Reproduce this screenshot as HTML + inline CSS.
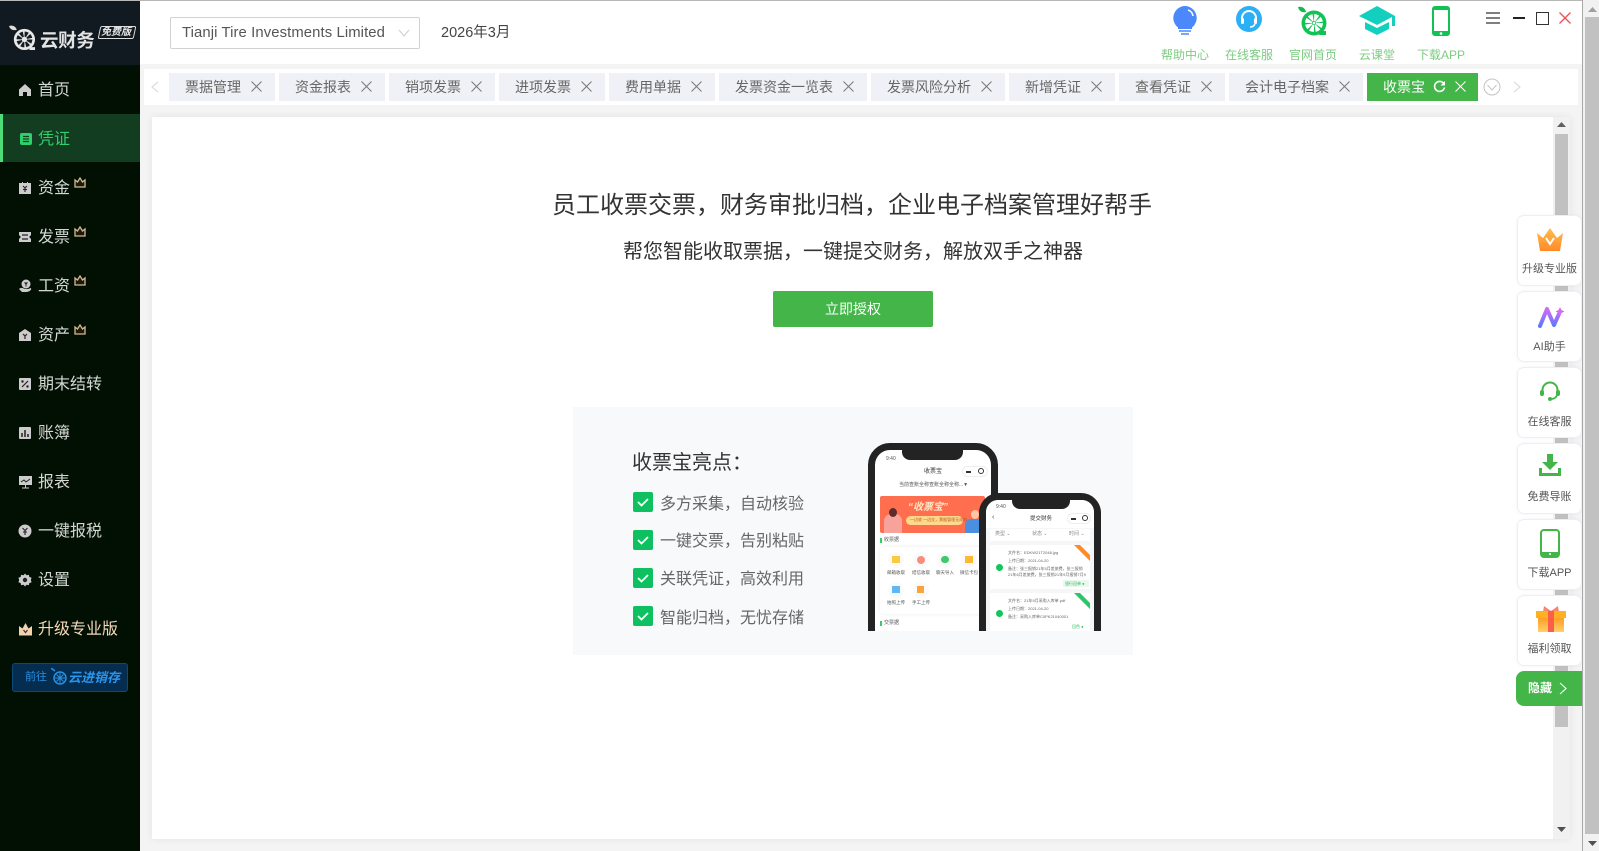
<!DOCTYPE html>
<html lang="zh-CN"><head><meta charset="utf-8"><title>云财务</title>
<style>
*{box-sizing:border-box}
html,body{margin:0;padding:0;width:1599px;height:851px;overflow:hidden;background:#f4f4f5;font-family:"Liberation Sans","Noto Sans CJK SC",sans-serif}
.a{position:absolute}
.t{position:absolute;white-space:nowrap}
#side{position:absolute;left:0;top:0;width:140px;height:851px;background:#020f03}
#logo{position:absolute;left:0;top:0;width:140px;height:65px;background:#111a20}
.n{position:absolute;left:0;width:140px;height:48px;color:#d4d8d4;font-size:16px;line-height:52px;padding-left:38px}
.n>svg{position:absolute;left:18px;top:18px}
.cr{position:absolute;left:74px;top:14px;width:12px;height:11px;line-height:0}
.cr svg{display:block}
.tab{position:absolute;top:73px;height:28px;background:#f0f1f7;color:#666;font-size:14px;line-height:28px;padding-left:16px;white-space:nowrap}
.tab svg{position:absolute;top:8px;right:13px}
.hl{position:absolute;top:47px;color:#7dcc80;font-size:12px;line-height:16px;width:70px;text-align:center;white-space:nowrap}
.f{position:absolute;left:1517px;width:65px;background:#fff;border:1px solid #eeeef9;border-radius:7px;box-shadow:0 0 3px rgba(120,120,180,.08)}
.f span{position:absolute;left:-3px;right:-3px;text-align:center;top:45px;font-size:11px;line-height:16px;color:#555;white-space:nowrap}
.f svg{position:absolute}
.chk{position:absolute;left:633px;width:20px;height:20px;background:#0ec05f;border-radius:2px}
.li{position:absolute;left:660px;font-size:16px;line-height:22px;color:#666;white-space:nowrap}
.x5{font-size:5px;line-height:7px;color:#555}
</style></head><body>

<div class="a" style="left:0;top:0;width:1582px;height:1px;background:#b8b8b8;z-index:5"></div>
<div class="a" style="left:140px;top:0;width:1442px;height:64px;background:#fff"></div>

<div id="side">
 <div id="logo">
  <svg class="a" style="left:9px;top:25px" width="27" height="26" viewBox="0 0 28 27"><path d="M0 1c3-1 7 0 8 4-3 1-7 0-8-4z" fill="#ddd"/><circle cx="16" cy="15" r="11" fill="#e8e8e8"/><circle cx="16" cy="15" r="5.500" fill="none" stroke="#161d22" stroke-width="5.500" stroke-dasharray="3 1.320"/><circle cx="16" cy="15" r="1.300" fill="#e8e8e8"/><path d="M22 23l5 0 0 3-6 0z" fill="#e8e8e8"/></svg>
  <div class="t" style="left:40px;top:29px;font-size:18.500px;line-height:24px;font-weight:700;color:#e4e4e4;letter-spacing:-.4px">云财务</div>
  <div class="a" style="left:99px;top:26px;width:36px;height:13px;border:1px solid #ddd;border-radius:2px;transform:skewX(-12deg)"></div>
  <div class="t" style="left:101px;top:27px;font-size:10px;line-height:12px;font-weight:700;color:#e8e8e8;font-style:italic">免费版</div>
 </div>

 <div class="n" style="top:65px"><svg width="14" height="14" viewBox="0 0 14 14"><path d="M7 1L1 6.500V13h4V9h4v4h4V6.500z" fill="#ccc"/></svg>首页</div>
 <div class="n" style="top:114px;background:#133d20;color:#2fd06c;border-left:3px solid #4cdc78;padding-left:35px"><svg style="left:16px" width="14" height="14" viewBox="0 0 14 14"><rect x="1" y="1" width="12" height="12" rx="2" fill="#2fd06c"/><path d="M4 4.500h6M4 7h6M4 9.500h6" stroke="#133d20" stroke-width="1.200"/></svg>凭证</div>
 <div class="n" style="top:163px"><svg width="14" height="14" viewBox="0 0 14 14"><path d="M1 2h3V1h1v1h4V1h1v1h3v11H1z" fill="#ccc"/><path d="M5 5l2 2 2-2M7 7v4M5 8.500h4" stroke="#222" stroke-width="1.100" fill="none"/></svg>资金<span class="cr"><svg width="12" height="11" viewBox="0 0 12 11"><path d="M1 3l2.500 2L6 1l2.500 4L11 3v7H1z" fill="#1c1a10" stroke="#d4bb8e" stroke-width="1.300"/></svg></span></div>
 <div class="n" style="top:212px"><svg width="14" height="14" viewBox="0 0 14 14"><path d="M1 2h12v3.500a1.500 1.500 0 000 3V12H1V8.500a1.500 1.500 0 000-3z" fill="#ccc"/><path d="M4 5h6M4 9h6" stroke="#222" stroke-width="1.200"/></svg>发票<span class="cr"><svg width="12" height="11" viewBox="0 0 12 11"><path d="M1 3l2.500 2L6 1l2.500 4L11 3v7H1z" fill="#1c1a10" stroke="#d4bb8e" stroke-width="1.300"/></svg></span></div>
 <div class="n" style="top:261px"><svg width="15" height="14" viewBox="0 0 15 14"><circle cx="8" cy="5" r="4.500" fill="#ccc"/><path d="M6.500 3.500L8 5l1.500-1.500M8 5v2.500" stroke="#222"/><path d="M1 10c2-2 4-1 6 0h3l3-1c1 2-2 4-5 4H4z" fill="#ccc"/></svg>工资<span class="cr"><svg width="12" height="11" viewBox="0 0 12 11"><path d="M1 3l2.500 2L6 1l2.500 4L11 3v7H1z" fill="#1c1a10" stroke="#d4bb8e" stroke-width="1.300"/></svg></span></div>
 <div class="n" style="top:310px"><svg width="14" height="14" viewBox="0 0 14 14"><path d="M7 1l6 4v8H1V5z" fill="#ccc"/><path d="M5 6l2 2 2-2M7 8v3" stroke="#222" stroke-width="1.200" fill="none"/></svg>资产<span class="cr"><svg width="12" height="11" viewBox="0 0 12 11"><path d="M1 3l2.500 2L6 1l2.500 4L11 3v7H1z" fill="#1c1a10" stroke="#d4bb8e" stroke-width="1.300"/></svg></span></div>
 <div class="n" style="top:359px"><svg width="14" height="14" viewBox="0 0 14 14"><rect x="1" y="1" width="12" height="12" rx="1" fill="#ccc"/><path d="M4 10l6-6" stroke="#222" stroke-width="1.200"/><circle cx="4.500" cy="4.500" r="1.200" fill="#222"/><circle cx="9.500" cy="9.500" r="1.200" fill="#222"/></svg>期末结转</div>
 <div class="n" style="top:408px"><svg width="14" height="14" viewBox="0 0 14 14"><rect x="1" y="1" width="12" height="12" rx="1" fill="#ccc"/><path d="M4 7v4M7 4v7M10 8v3" stroke="#222" stroke-width="1.500"/></svg>账簿</div>
 <div class="n" style="top:457px"><svg width="15" height="14" viewBox="0 0 15 14"><rect x="1" y="1" width="13" height="9" fill="#ccc"/><path d="M3 7l3-2 2 2 4-3" stroke="#222" fill="none"/><path d="M7.500 10v3M4 13h7" stroke="#ccc"/></svg>报表</div>
 <div class="n" style="top:506px"><svg width="14" height="14" viewBox="0 0 14 14"><circle cx="7" cy="7" r="6.500" fill="#ccc"/><path d="M4.500 4L7 6.500 9.500 4M7 6.500V11M5 8h4" stroke="#222" stroke-width="1.100" fill="none"/></svg>一键报税</div>
 <div class="n" style="top:555px"><svg width="14" height="14" viewBox="0 0 14 14"><path d="M7 .5l1.500 1.700 2.300-.5.600 2.300 2.200.8-.8 2.200.8 2.200-2.200.8-.6 2.300-2.300-.5L7 13.500l-1.500-1.700-2.300.5-.6-2.300-2.200-.8.800-2.200-.8-2.200 2.200-.8.600-2.300 2.300.5z" fill="#ccc"/><circle cx="7" cy="7" r="2.200" fill="#222"/></svg>设置</div>
 <div class="n" style="top:604px;color:#f5d9b8"><svg width="15" height="14" viewBox="0 0 15 14"><path d="M1 4l3.500 2.500L7.500 1l3 5.500L14 4v9.500H1z" fill="#f3d3ae"/><path d="M5.500 8L7.500 10.500 9.500 8" stroke="#333" stroke-width="1.200" fill="none"/></svg>升级专业版</div>

 <div class="a" style="left:12px;top:663px;width:116px;height:29px;background:#052d4f;border:1px solid #0b4a78;border-radius:3px"></div>
 <div class="t" style="left:25px;top:670px;font-size:11px;line-height:15px;color:#2b8fe0">前往</div>
 <svg class="a" style="left:51px;top:668px" width="16" height="18" viewBox="0 0 16 18"><path d="M0 0l4 3" stroke="#2b8fe0" stroke-width="1.500"/><circle cx="9" cy="10" r="6" fill="none" stroke="#2b8fe0" stroke-width="1.500"/><path d="M9 5v10M4 10h10M5.500 6.500l7 7M12.500 6.500l-7 7" stroke="#2b8fe0"/></svg>
 <div class="t" style="left:68px;top:669px;font-size:13px;line-height:17px;font-weight:700;font-style:italic;color:#2b95ee">云进销存</div>
</div>

<!-- header -->
<div class="a" style="left:170px;top:17px;width:250px;height:32px;border:1px solid #d2d2d2;border-radius:2px;background:#fff"></div>
<div class="t" style="left:182px;top:23px;font-size:14.850px;line-height:20px;color:#555;letter-spacing:.1px">Tianji Tire Investments Limited</div>
<svg class="a" style="left:398px;top:29px" width="12" height="8" viewBox="0 0 12 8"><path d="M1 1l5 6 5-6" fill="none" stroke="#ccc"/></svg>
<div class="t" style="left:441px;top:23px;font-size:14.500px;line-height:20px;color:#444">2026年3月</div>

<svg class="a" style="left:1172px;top:5px" width="26" height="32" viewBox="0 0 26 32"><path d="M13 1a12 12 0 00-7 21.500V24h14v-1.500A12 12 0 0013 1z" fill="#4b88fb"/><path d="M16 5a7 7 0 015 6" stroke="#fff" stroke-width="1.600" fill="none"/><path d="M7 26h12M9 29h8" stroke="#4b88fb" stroke-width="1.600"/></svg>
<svg class="a" style="left:1236px;top:6px" width="26" height="26" viewBox="0 0 26 26"><circle cx="13" cy="13" r="13" fill="#2bb0f5"/><path d="M6 14v-2a7 7 0 0114 0v2" fill="none" stroke="#fff" stroke-width="2"/><rect x="5" y="12" width="3" height="6" rx="1.500" fill="#fff"/><rect x="18" y="12" width="3" height="6" rx="1.500" fill="#fff"/><path d="M19 18c-1 2-3 3-5 3" fill="none" stroke="#fff" stroke-width="1.500"/></svg>
<svg class="a" style="left:1297px;top:6px" width="32" height="30" viewBox="0 0 32 30"><path d="M1 1c4-1 7 1 8 5-4 1-7-1-8-5z" fill="#13b84f"/><circle cx="17" cy="17" r="12.500" fill="#13c257"/><circle cx="17" cy="17" r="5.500" fill="none" stroke="#fff" stroke-width="7" stroke-dasharray="3.200 1.120"/><circle cx="17" cy="17" r="1.300" fill="#fff"/><path d="M24 25l5 0 0 4-7 0z" fill="#13c257"/></svg>
<svg class="a" style="left:1359px;top:6px" width="36" height="30" viewBox="0 0 36 30"><path d="M18 0L0 10l18 9 15-8v9h3V10z" fill="#12d0bd"/><path d="M6 16v7l12 6 12-6v-7l-12 6z" fill="#12d0bd"/></svg>
<svg class="a" style="left:1432px;top:6px" width="18" height="30" viewBox="0 0 18 30"><rect width="18" height="30" rx="3" fill="#13c257"/><rect x="2" y="4" width="14" height="21" fill="#fff"/><circle cx="9" cy="27.500" r="1.300" fill="#fff"/></svg>

<div class="hl" style="left:1150px">帮助中心</div>
<div class="hl" style="left:1214px">在线客服</div>
<div class="hl" style="left:1278px">官网首页</div>
<div class="hl" style="left:1342px">云课堂</div>
<div class="hl" style="left:1406px">下载APP</div>

<svg class="a" style="left:1486px;top:11px" width="14" height="14" viewBox="0 0 14 14"><path d="M0 2h14M0 7h14M0 12h14" stroke="#555" stroke-width="1.400"/></svg>
<div class="a" style="left:1513px;top:17px;width:12px;height:2px;background:#222"></div>
<div class="a" style="left:1536px;top:12px;width:13px;height:13px;border:1.500px solid #333"></div>
<svg class="a" style="left:1559px;top:12px" width="12" height="12" viewBox="0 0 12 12"><path d="M.5.500l11 11M11.500.500l-11 11" stroke="#f0504f" stroke-width="1.300"/></svg>

<!-- tabs -->
<div class="a" style="left:144px;top:69px;width:1434px;height:36px;background:#fff"></div>
<svg class="a" style="left:151px;top:81px" width="8" height="12" viewBox="0 0 8 12"><path d="M7 1L1 6l6 5" fill="none" stroke="#ddd" stroke-width="1.200"/></svg>

<div class="tab" style="left:169px;width:106px">票据管理<svg width="11" height="11" viewBox="0 0 11 11"><path d="M.5.500l10 10M10.500.500l-10 10" stroke="#777"/></svg></div>
<div class="tab" style="left:279px;width:106px">资金报表<svg width="11" height="11" viewBox="0 0 11 11"><path d="M.5.500l10 10M10.500.500l-10 10" stroke="#777"/></svg></div>
<div class="tab" style="left:389px;width:106px">销项发票<svg width="11" height="11" viewBox="0 0 11 11"><path d="M.5.500l10 10M10.500.500l-10 10" stroke="#777"/></svg></div>
<div class="tab" style="left:499px;width:106px">进项发票<svg width="11" height="11" viewBox="0 0 11 11"><path d="M.5.500l10 10M10.500.500l-10 10" stroke="#777"/></svg></div>
<div class="tab" style="left:609px;width:106px">费用单据<svg width="11" height="11" viewBox="0 0 11 11"><path d="M.5.500l10 10M10.500.500l-10 10" stroke="#777"/></svg></div>
<div class="tab" style="left:719px;width:148px">发票资金一览表<svg width="11" height="11" viewBox="0 0 11 11"><path d="M.5.500l10 10M10.500.500l-10 10" stroke="#777"/></svg></div>
<div class="tab" style="left:871px;width:134px">发票风险分析<svg width="11" height="11" viewBox="0 0 11 11"><path d="M.5.500l10 10M10.500.500l-10 10" stroke="#777"/></svg></div>
<div class="tab" style="left:1009px;width:106px">新增凭证<svg width="11" height="11" viewBox="0 0 11 11"><path d="M.5.500l10 10M10.500.500l-10 10" stroke="#777"/></svg></div>
<div class="tab" style="left:1119px;width:106px">查看凭证<svg width="11" height="11" viewBox="0 0 11 11"><path d="M.5.500l10 10M10.500.500l-10 10" stroke="#777"/></svg></div>
<div class="tab" style="left:1229px;width:134px">会计电子档案<svg width="11" height="11" viewBox="0 0 11 11"><path d="M.5.500l10 10M10.500.500l-10 10" stroke="#777"/></svg></div>
<div class="tab" style="left:1367px;width:111px;background:#43b549;color:#fff">收票宝<svg style="right:auto;left:66px;top:7px" width="13" height="13" viewBox="0 0 13 13"><path d="M11 4A5 5 0 1011.500 7.500" fill="none" stroke="#fff" stroke-width="1.600"/><path d="M12 1v4.500H7.500z" fill="#fff"/></svg><svg style="right:12px" width="11" height="11" viewBox="0 0 11 11"><path d="M.5.500l10 10M10.500.500l-10 10" stroke="#fff"/></svg></div>

<svg class="a" style="left:1483px;top:78px" width="18" height="18" viewBox="0 0 18 18"><circle cx="9" cy="9" r="8" fill="none" stroke="#c4c4c4"/><path d="M4.500 7l4.500 5 4.500-5" fill="none" stroke="#c4c4c4"/></svg>
<svg class="a" style="left:1513px;top:81px" width="8" height="12" viewBox="0 0 8 12"><path d="M1 1l6 5-6 5" fill="none" stroke="#ddd" stroke-width="1.200"/></svg>

<!-- main card -->
<div class="a" style="left:152px;top:117px;width:1418px;height:722px;background:#fff;box-shadow:0 0 8px rgba(0,0,0,.07)"></div>
<div class="a" style="left:1553px;top:117px;width:17px;height:722px;background:#f1f1f1"></div>
<div class="a" style="left:1555px;top:134px;width:13px;height:593px;background:#c1c1c1"></div>
<svg class="a" style="left:1557px;top:122px" width="9" height="6"><path d="M4.500 0L9 5H0z" fill="#606060"/></svg>
<svg class="a" style="left:1557px;top:827px" width="9" height="6"><path d="M0 0h9L4.500 5z" fill="#505050"/></svg>

<div class="t" style="left:552px;top:189px;width:600px;text-align:center;font-size:24px;line-height:34px;color:#333">员工收票交票，财务审批归档，企业电子档案管理好帮手</div>
<div class="t" style="left:623px;top:237px;width:460px;text-align:center;font-size:20px;line-height:30px;color:#333">帮您智能收取票据，一键提交财务，解放双手之神器</div>
<div class="a" style="left:773px;top:291px;width:160px;height:36px;background:#43b549;border-radius:2px;color:#fff;font-size:14px;line-height:36px;text-align:center">立即授权</div>

<div class="a" style="left:573px;top:407px;width:560px;height:248px;background:#f8f9fb"></div>
<div class="t" style="left:632px;top:449px;font-size:20px;line-height:28px;color:#333">收票宝亮点：</div>

<div class="chk" style="top:492px"><svg width="20" height="20" viewBox="0 0 20 20"><path d="M5 10l3.500 3.500L15 7" fill="none" stroke="#fff" stroke-width="1.800"/></svg></div><div class="li" style="top:494px">多方采集，自动核验</div>
<div class="chk" style="top:530px"><svg width="20" height="20" viewBox="0 0 20 20"><path d="M5 10l3.500 3.500L15 7" fill="none" stroke="#fff" stroke-width="1.800"/></svg></div><div class="li" style="top:531px">一键交票，告别粘贴</div>
<div class="chk" style="top:568px"><svg width="20" height="20" viewBox="0 0 20 20"><path d="M5 10l3.500 3.500L15 7" fill="none" stroke="#fff" stroke-width="1.800"/></svg></div><div class="li" style="top:569px">关联凭证，高效利用</div>
<div class="chk" style="top:606px"><svg width="20" height="20" viewBox="0 0 20 20"><path d="M5 10l3.500 3.500L15 7" fill="none" stroke="#fff" stroke-width="1.800"/></svg></div><div class="li" style="top:608px">智能归档，无忧存储</div>

<!-- phones -->
<div class="a" style="left:0;top:0;width:1599px;height:631px;overflow:hidden">
 <div class="a" style="left:868px;top:443px;width:130px;height:240px;background:#fff;border:7px solid #232323;border-radius:22px"></div>
 <div class="a" style="left:902px;top:449px;width:61px;height:11px;background:#232323;border-radius:0 0 8px 8px"></div>
 <div class="t x5" style="left:886px;top:456px">9:40</div>
 <div class="t" style="left:924px;top:468px;font-size:6px;line-height:8px;color:#333">收票宝</div>
 <div class="a" style="left:962px;top:466px;width:26px;height:11px;border:1px solid #eee;border-radius:6px"></div>
 <div class="a" style="left:966px;top:471px;width:5px;height:2px;background:#333"></div>
 <div class="a" style="left:978px;top:468px;width:6px;height:6px;border:1px solid #333;border-radius:50%"></div>
 <div class="t x5" style="left:899px;top:482px">当前查账全称查账全称全称...▼</div>
 <div class="a" style="left:880px;top:496px;width:105px;height:37px;background:#ff6e4e;border-radius:2px"></div>
 <div class="t" style="left:908px;top:502px;font-size:10px;line-height:12px;font-weight:700;color:#ffe9c8;font-style:italic">“收票宝”</div>
 <div class="a" style="left:906px;top:516px;width:57px;height:9px;background:#ffd98a;border-radius:5px"></div>
 <div class="t" style="left:910px;top:517px;font-size:4px;line-height:6px;color:#b4552c">一边收 一边交，票据管理无烦恼</div>
 <div class="a" style="left:884px;top:514px;width:18px;height:19px;background:#f7a29a;border-radius:7px 7px 0 0"></div>
 <div class="a" style="left:889px;top:508px;width:8px;height:9px;background:#5b2c2c;border-radius:50%"></div>
 <div class="a" style="left:965px;top:519px;width:20px;height:14px;background:#4a8fe0;border-radius:6px 0 0 0"></div>
 <div class="a" style="left:971px;top:510px;width:8px;height:9px;background:#f7c7a8;border-radius:50%"></div>
 <div class="a" style="left:880px;top:538px;width:2px;height:5px;background:#2fd06c"></div>
 <div class="t x5" style="left:884px;top:537px">收票据</div>
 <div class="a" style="left:880px;top:547px;width:105px;height:67px;background:#fff;border-radius:3px;box-shadow:0 0 4px rgba(0,0,0,.08)"></div>
 <div class="a" style="left:888px;top:552px;width:16px;height:16px;background:#fafafa;border-radius:50%"></div><div class="a" style="left:892px;top:556px;width:8px;height:7px;background:#fdc93f"></div>
 <div class="a" style="left:913px;top:552px;width:16px;height:16px;background:#fafafa;border-radius:50%"></div><div class="a" style="left:917px;top:556px;width:8px;height:8px;background:#f78e80;border-radius:50%"></div>
 <div class="a" style="left:937px;top:552px;width:16px;height:16px;background:#fafafa;border-radius:50%"></div><div class="a" style="left:941px;top:556px;width:8px;height:7px;background:#3fca6a;border-radius:4px"></div>
 <div class="a" style="left:961px;top:552px;width:16px;height:16px;background:#fafafa;border-radius:50%"></div><div class="a" style="left:965px;top:556px;width:8px;height:7px;background:#fdb92f"></div>
 <div class="t" style="left:887px;top:570px;font-size:4.500px;line-height:6px;color:#555">邮箱收取</div>
 <div class="t" style="left:912px;top:570px;font-size:4.500px;line-height:6px;color:#555">结信收取</div>
 <div class="t" style="left:936px;top:570px;font-size:4.500px;line-height:6px;color:#555">聊天导入</div>
 <div class="t" style="left:960px;top:570px;font-size:4.500px;line-height:6px;color:#555">微信卡包</div>
 <div class="a" style="left:888px;top:582px;width:16px;height:16px;background:#fafafa;border-radius:50%"></div><div class="a" style="left:892px;top:586px;width:8px;height:7px;background:#5db8f5"></div>
 <div class="a" style="left:913px;top:582px;width:16px;height:16px;background:#fafafa;border-radius:50%"></div><div class="a" style="left:917px;top:586px;width:7px;height:7px;background:#fba43c"></div>
 <div class="t" style="left:887px;top:600px;font-size:4.500px;line-height:6px;color:#555">拍照上传</div>
 <div class="t" style="left:912px;top:600px;font-size:4.500px;line-height:6px;color:#555">手工上传</div>
 <div class="a" style="left:880px;top:621px;width:2px;height:5px;background:#2fd06c"></div>
 <div class="t x5" style="left:884px;top:620px">交票据</div>

 <div class="a" style="left:979px;top:493px;width:122px;height:200px;background:#f5f6f8;border:7px solid #232323;border-radius:20px"></div>
 <div class="a" style="left:986px;top:500px;width:108px;height:28px;background:#fff;border-radius:12px 12px 0 0"></div>
 <div class="a" style="left:1012px;top:499px;width:58px;height:10px;background:#232323;border-radius:0 0 8px 8px"></div>
 <div class="t x5" style="left:996px;top:504px">9:40</div>
 <div class="t" style="left:1030px;top:515px;font-size:5.500px;line-height:8px;color:#333">提交财务</div>
 <div class="a" style="left:1067px;top:513px;width:24px;height:11px;border:1px solid #eee;border-radius:6px"></div>
 <div class="a" style="left:1071px;top:518px;width:5px;height:2px;background:#333"></div>
 <div class="a" style="left:1082px;top:515px;width:6px;height:6px;border:1px solid #333;border-radius:50%"></div>
 <div class="t" style="left:992px;top:514px;font-size:7px;line-height:8px;color:#444">‹</div>
 <div class="a" style="left:990px;top:529px;width:100px;height:12px;background:#fff"></div>
 <div class="t x5" style="left:995px;top:531px;color:#888">类型 ⌄</div>
 <div class="t x5" style="left:1032px;top:531px;color:#888">状态 ⌄</div>
 <div class="t x5" style="left:1069px;top:531px;color:#888">时间 ⌄</div>
 <div class="a" style="left:990px;top:545px;width:100px;height:44px;background:#fff"></div>
 <div class="a" style="left:996px;top:564px;width:7px;height:7px;background:#15c45f;border-radius:50%"></div>
 <div class="t" style="left:1008px;top:550px;font-size:4px;line-height:6px;color:#666">文件名：EDKW21T2048.jpg</div>
 <div class="t" style="left:1008px;top:558px;font-size:4px;line-height:6px;color:#666">上传日期：2021-04-20</div>
 <div class="t" style="left:1008px;top:566px;font-size:4px;line-height:6px;color:#666">备注：张三报销21年5月差旅费，张三报销</div>
 <div class="t" style="left:1008px;top:572px;font-size:4px;line-height:6px;color:#666">21年6月差旅费，张三报销21年9月报销7月9</div>
 <div class="a" style="left:1063px;top:580px;width:26px;height:7px;background:#e9f9ee"></div>
 <div class="t" style="left:1065px;top:581px;font-size:4px;line-height:5px;color:#2fbb60">银行回单 ●</div>
 <svg class="a" style="left:1074px;top:545px" width="16" height="16"><path d="M0 0h6l10 10v6z" fill="#ff8a2a"/></svg>
 <div class="a" style="left:990px;top:593px;width:100px;height:44px;background:#fff"></div>
 <div class="a" style="left:996px;top:610px;width:7px;height:7px;background:#15c45f;border-radius:50%"></div>
 <div class="t" style="left:1008px;top:598px;font-size:4px;line-height:6px;color:#666">文件名：21年9月采购入库单.pdf</div>
 <div class="t" style="left:1008px;top:606px;font-size:4px;line-height:6px;color:#666">上传日期：2021-04-20</div>
 <div class="t" style="left:1008px;top:614px;font-size:4px;line-height:6px;color:#666">备注：采购入库单C0PK21040001</div>
 <div class="t" style="left:1072px;top:624px;font-size:4px;line-height:5px;color:#2fbb60">回色 ●</div>
 <svg class="a" style="left:1074px;top:593px" width="16" height="16"><path d="M0 0h6l10 10v6z" fill="#2fc46a"/></svg>
</div>

<!-- floating buttons -->
<div class="f" style="top:215px;height:71px"><svg style="left:19px;top:11px" width="26" height="25" viewBox="0 0 26 25"><defs><linearGradient id="g1" x1="0" y1="0" x2="0" y2="1"><stop offset="0" stop-color="#ffbe4d"/><stop offset="1" stop-color="#ff8a2a"/></linearGradient></defs><path d="M0 6l6 5 7-10 7 10 6-5-3 18H3z" fill="url(#g1)"/><path d="M9 11l4 6 4-6" fill="none" stroke="#fff" stroke-width="2"/></svg><span>升级专业版</span></div>
<div class="f" style="top:291px;height:71px"><svg style="left:20px;top:14px" width="28" height="24" viewBox="0 0 28 24"><defs><linearGradient id="g2" x1="0" y1="0" x2="0" y2="1"><stop offset="0" stop-color="#d16cf0"/><stop offset="1" stop-color="#5f78ff"/></linearGradient></defs><path d="M2 20L9 3l7 16 5-11" fill="none" stroke="url(#g2)" stroke-width="4" stroke-linecap="round" stroke-linejoin="round"/><path d="M22 1l1.500 3 3 1.500-3 1.500L22 10l-1.500-3-3-1.500 3-1.500z" fill="#d16cf0"/></svg><span style="top:47px">AI助手</span></div>
<div class="f" style="top:367px;height:71px"><svg style="left:22px;top:13px" width="20" height="20" viewBox="0 0 20 20"><path d="M2.500 11V9a7.500 7.500 0 0115 0v2" fill="none" stroke="#43b549" stroke-width="2"/><rect x="0" y="9" width="4" height="6" rx="2" fill="#43b549"/><rect x="16" y="9" width="4" height="6" rx="2" fill="#43b549"/><path d="M17 14c-1 3-3 4-6 4" fill="none" stroke="#43b549" stroke-width="1.800"/><circle cx="10" cy="18" r="2" fill="#43b549"/></svg><span style="top:46px">在线客服</span></div>
<div class="f" style="top:443px;height:71px"><svg style="left:20px;top:10px" width="24" height="24" viewBox="0 0 24 24"><path d="M9 0h6v8h5l-8 8-8-8h5z" fill="#43b549"/><path d="M1 14v8h22v-8h-3v5H4v-5z" fill="#43b549"/></svg><span style="top:45px">免费导账</span></div>
<div class="f" style="top:519px;height:71px"><svg style="left:22px;top:9px" width="20" height="29" viewBox="0 0 20 29"><rect x="1" y="1" width="18" height="27" rx="3" fill="#fff" stroke="#43b549" stroke-width="2"/><path d="M1 23h18v3a2 2 0 01-2 2H3a2 2 0 01-2-2z" fill="#43b549"/><circle cx="10" cy="25" r="1" fill="#fff"/></svg><span style="top:45px">下载APP</span></div>
<div class="f" style="top:595px;height:71px"><svg style="left:18px;top:9px" width="30" height="28" viewBox="0 0 30 28"><defs><linearGradient id="g3" x1="0" y1="0" x2="0" y2="1"><stop offset="0" stop-color="#ff9a1f"/><stop offset="1" stop-color="#ffd16a"/></linearGradient></defs><path d="M8 1l7 5 7-5 1 6H7z" fill="#f8856e"/><rect x="2" y="12" width="26" height="15" fill="url(#g3)"/><rect x="0" y="6" width="30" height="7" fill="#ffb11f"/><rect x="12" y="6" width="6" height="21" fill="#f9604c"/></svg><span style="top:45px">福利领取</span></div>
<div class="a" style="left:1516px;top:671px;width:66px;height:35px;background:#43b549;border-radius:8px 0 0 8px"></div>
<div class="t" style="left:1528px;top:680px;font-size:12px;line-height:16px;color:#fff;font-weight:700">隐藏</div>
<svg class="a" style="left:1559px;top:682px" width="8" height="13" viewBox="0 0 8 13"><path d="M1 1l6 5.500L1 12" fill="none" stroke="#fff" stroke-width="1.100"/></svg>

<!-- outer scrollbar -->
<div class="a" style="left:1582px;top:0;width:1px;height:851px;background:#a8a8a8"></div>
<div class="a" style="left:1583px;top:0;width:16px;height:851px;background:#f1f1f1"></div>
<div class="a" style="left:1585px;top:17px;width:14px;height:817px;background:#c1c1c1"></div>
<svg class="a" style="left:1588px;top:7px" width="9" height="6"><path d="M4.500 0L9 5H0z" fill="#a0a0a0"/></svg>
<svg class="a" style="left:1588px;top:841px" width="9" height="6"><path d="M0 0h9L4.500 5z" fill="#505050"/></svg>
</body></html>
